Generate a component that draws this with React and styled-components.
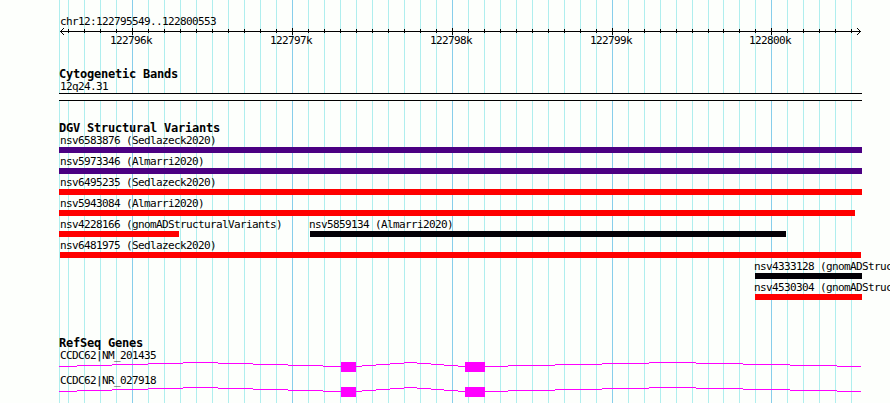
import React from 'react';
import styled, { createGlobalStyle } from 'styled-components';

const LEFT = 59;
const MINOR_LINES = [59];
for (let x = 68; x <= 708; x += 16) MINOR_LINES.push(x);
for (let x = 723; x <= 851; x += 16) MINOR_LINES.push(x);
const MAJOR_LINES = [132, 292, 452, 612, 771];

const positions = [
    { label: '122796k', x: 110 },
    { label: '122797k', x: 270 },
    { label: '122798k', x: 430 },
    { label: '122799k', x: 590 },
    { label: '122800k', x: 749 },
];

const variantRows = [
    [{ id: 'nsv6583876 (Sedlazeck2020)', start: 59, end: 862, color: '#4b0082' }],
    [{ id: 'nsv5973346 (Almarri2020)', start: 59, end: 862, color: '#4b0082' }],
    [{ id: 'nsv6495235 (Sedlazeck2020)', start: 59, end: 862, color: '#ff0000' }],
    [{ id: 'nsv5943084 (Almarri2020)', start: 59, end: 855, color: '#ff0000' }],
    [
        { id: 'nsv4228166 (gnomADStructuralVariants)', start: 59, end: 179, color: '#ff0000' },
        { id: 'nsv5859134 (Almarri2020)', start: 310, end: 786, color: '#020006' },
    ],
    [{ id: 'nsv6481975 (Sedlazeck2020)', start: 60, end: 861, color: '#ff0000' }],
    [{ id: 'nsv4333128 (gnomADStructuralVariants)', start: 755, end: 862, color: '#020006' }],
    [{ id: 'nsv4530304 (gnomADStructuralVariants)', start: 755, end: 862, color: '#ff0000' }],
];

const genes = ['CCDC62|NM_201435', 'CCDC62|NR_027918'];

// [start x, height above the base line]
const introns = [
    [59, 0], [77, 1], [112, 2], [148, 3], [183, 4], [218, 3], [253, 2], [288, 1], [323, 0],
    [362, 1], [376, 2], [390, 3], [404, 4], [417, 3], [431, 2], [444, 1], [458, 0],
    [508, 1], [555, 2], [602, 3], [649, 4], [696, 3], [743, 2], [790, 1], [837, 0], [861, 0],
];

const GridLines = () => (
    <Backdrop width="890" height="403" shapeRendering="crispEdges">
        {MINOR_LINES.map((x) => (
            <rect key={x} x={x} y="0" width="1" height="403" fill="#afeeee" />
        ))}
        {MAJOR_LINES.map((x) => (
            <rect key={x} x={x} y="0" width="1" height="403" fill="#87ceeb" />
        ))}
    </Backdrop>
);

const Scale = () => (
    <Drawing width="803" height="7" viewBox="59 28 803 7" shapeRendering="crispEdges">
        <rect x="60" y="31" width="801" height="1" />
        {MINOR_LINES.slice(1).map((x) => (
            <rect key={x} x={x} y="29" width="1" height="4" />
        ))}
        {MAJOR_LINES.map((x) => (
            <rect key={x} x={x} y="28" width="1" height="7" />
        ))}
        {[1, 2, 3].map((d) => (
            <g key={d}>
                <rect x={60 + d} y={31 - d} width="1" height="1" />
                <rect x={60 + d} y={31 + d} width="1" height="1" />
                <rect x={860 - d} y={31 - d} width="1" height="1" />
                <rect x={860 - d} y={31 + d} width="1" height="1" />
            </g>
        ))}
    </Drawing>
);

const GeneModel = () => (
    <Drawing width="803" height="10" viewBox="59 0 803 10" fill="#ff00ff" shapeRendering="crispEdges">
        {introns.slice(0, -1).map(([x, rise], i) => (
            <rect key={x} x={x} y={4 - rise} width={introns[i + 1][0] - x} height="1" />
        ))}
        <rect x="341" y="0" width="15" height="10" />
        <rect x="465" y="0" width="20" height="10" />
    </Drawing>
);

const App = () => {
    return (
        <Browser>
            <GlobalStyle />
            <GridLines />
            <Overview>
                <Label>chr12:122795549..122800553</Label>
                <Scale />
                <Positions>
                    {positions.map((p, i) => (
                        <Position key={p.label} $gap={p.x - (i ? positions[i - 1].x + 42 : LEFT)}>
                            {p.label}
                        </Position>
                    ))}
                </Positions>
            </Overview>
            <Track $space={19}>
                <Title>Cytogenetic Bands</Title>
                <Label>12q24.31</Label>
                <Band />
            </Track>
            <Track $space={20}>
                <Title>DGV Structural Variants</Title>
                {variantRows.map((row) => (
                    <VariantRow key={row[0].id}>
                        {row.map((v, i) => (
                            <Variant
                                key={v.id}
                                $gap={v.start - (i ? row[i - 1].end : LEFT)}
                                $width={v.end - v.start}
                            >
                                <Label $indent={v.start > 60 ? -1 : 60 - v.start}>{v.id}</Label>
                                <Bar $color={v.color} />
                            </Variant>
                        ))}
                    </VariantRow>
                ))}
            </Track>
            <Track $space={36}>
                <Title>RefSeq Genes</Title>
                {genes.map((gene) => (
                    <Gene key={gene}>
                        <Label>{gene}</Label>
                        <GeneModel />
                    </Gene>
                ))}
            </Track>
        </Browser>
    );
};

export default App;

// Styled Components
const GlobalStyle = createGlobalStyle`
    body {
        margin: 0;
        overflow: hidden;
        background: #fdfffc;
    }
`;

const Browser = styled.div`
    position: relative;
    display: flex;
    flex-direction: column;
    box-sizing: border-box;
    width: 890px;
    height: 403px;
    padding: 13px 0 0 ${LEFT}px;
    overflow: hidden;
    color: #000;
    font-family: 'DejaVu Sans Mono', monospace;
    font-size: 11px;
    letter-spacing: -0.622px;
`;

/* vertical guides behind every track */
const Backdrop = styled.svg`
    position: absolute;
    top: 0;
    left: 0;
    z-index: -1;
`;

const Drawing = styled.svg`
    display: block;
    flex: none;
`;

const Overview = styled.div`
    height: 35px;
`;

const Label = styled.div`
    height: 15px;
    margin-left: ${({ $indent = 1 }) => $indent}px;
    line-height: 18px;
    white-space: pre;
`;

const Positions = styled.div`
    display: flex;
`;

const Position = styled.span`
    width: 42px;
    margin-left: ${({ $gap }) => $gap}px;
    line-height: 11px;
`;

const Track = styled.section`
    display: flex;
    flex-direction: column;
    margin-top: ${({ $space }) => $space}px;
`;

const Title = styled.h3`
    height: 11px;
    margin: 0;
    font-size: 12px;
    font-weight: bold;
    letter-spacing: -0.224px;
    line-height: 15px;
`;

const Band = styled.div`
    width: 803px;
    height: 8px;
    box-sizing: border-box;
    background: #fdfffc;
    border: solid #000;
    border-width: 1px 0;
`;

const VariantRow = styled.div`
    display: flex;
    height: 21px;
`;

const Variant = styled.div`
    flex: none;
    width: ${({ $width }) => $width}px;
    margin-left: ${({ $gap }) => $gap}px;
`;

const Bar = styled.div`
    height: 6px;
    background: ${({ $color }) => $color};
`;

const Gene = styled.div`
    height: 25px;
`;
